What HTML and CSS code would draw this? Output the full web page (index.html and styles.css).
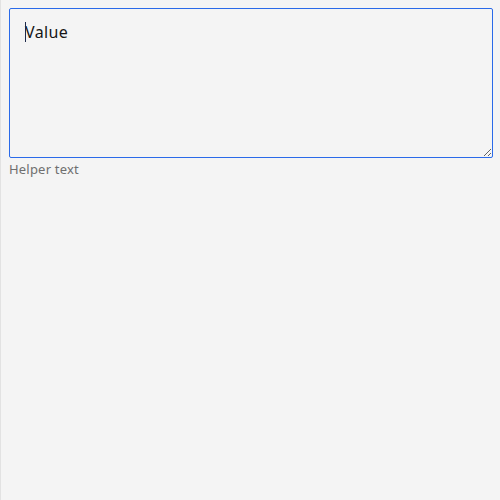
FILE: index.html
```html
<!DOCTYPE html>
<html>
<head>
<meta charset="utf-8">
<link rel="stylesheet" href="styles.css">
</head>
<body>
<div class="page">
  <div class="field">
    <div class="input-wrap">
      <textarea class="input">Value</textarea>
      <span class="caret"></span>
    </div>
    <div class="helper">Helper text</div>
  </div>
</div>
</body>
</html>
```
FILE: styles.css
```css
html, body {
  margin: 0;
  padding: 0;
  background: #f4f4f4;
}
.page {
  box-sizing: border-box;
  min-height: 500px;
  border-left: 1px solid #e2e2e2;
  padding: 8px 7px 8px 8px;
}
.field {
  display: flex;
  flex-direction: column;
  gap: 3px;
}
.input-wrap {
  position: relative;
  width: 484px;
  height: 150px;
}
.input {
  display: block;
  box-sizing: border-box;
  width: 484px;
  height: 150px;
  margin: 0;
  padding: 12px 15px;
  border: 1px solid #2a6ae9;
  border-radius: 2px;
  background: #f4f4f4;
  color: #161616;
  font-family: "Noto Sans", sans-serif;
  font-size: 16px;
  line-height: 22px;
  letter-spacing: 0.4px;
  outline: none;
  resize: vertical;
  caret-color: transparent;
}
.caret {
  position: absolute;
  left: 16px;
  top: 14px;
  width: 1px;
  height: 20px;
  background: #1d2a4a;
}
.helper {
  font-family: "Noto Sans", sans-serif;
  font-size: 13px;
  line-height: 16px;
  letter-spacing: 0.2px;
  color: #6f6f6f;
}
```
